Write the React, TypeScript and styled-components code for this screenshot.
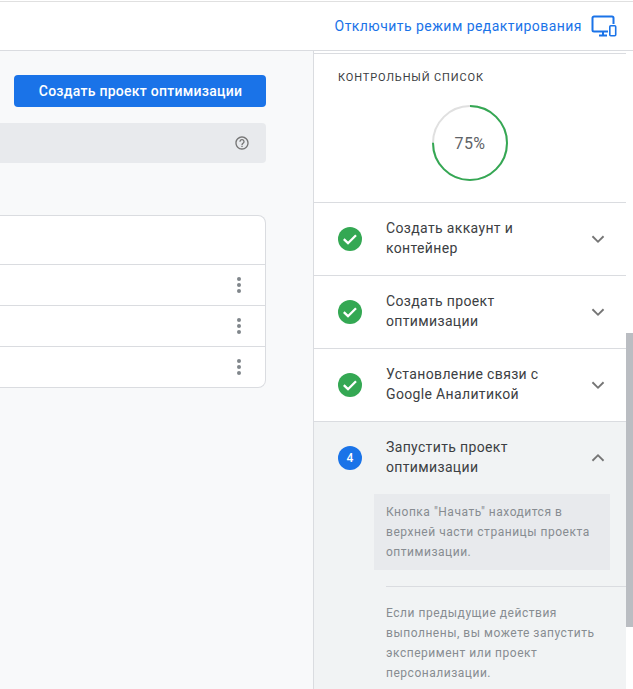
import React from 'react';
import styled, { createGlobalStyle } from 'styled-components';

const GlobalStyle = createGlobalStyle`
	html, body {
		margin: 0;
		padding: 0;
		background: #fff;
		height: 100%;
		overflow: hidden;
		font-family: Roboto, "Noto Sans", sans-serif;
	}
`;

const Page = styled.div`
	width: 633px;
	height: 689px;
	overflow: hidden;
	display: flex;
	flex-direction: column;
`;

const Header = styled.header`
	margin-top: 1px;
	height: 48px;
	flex: none;
	border-top: 1px solid #e0e0e0;
	border-bottom: 1px solid #dadce0;
	display: flex;
	align-items: center;
	justify-content: flex-end;
	padding-right: 16px;
	gap: 9px;
`;

const EditLink = styled.a`
	color: #1a73e8;
	font-size: 14px;
	letter-spacing: 0.45px;
`;

const Body = styled.div`
	flex: 1;
	display: flex;
	min-height: 0;
`;

const Main = styled.main`
	width: 313px;
	flex: none;
	box-sizing: border-box;
	background: #f8f9fa;
	padding: 24px 47px 0 0;
	display: flex;
	flex-direction: column;
	align-items: flex-end;
`;

const PrimaryButton = styled.button`
	width: 252px;
	height: 32px;
	border: none;
	border-radius: 4px;
	background: #1a73e8;
	color: #fff;
	font-family: inherit;
	font-size: 14px;
	font-weight: 500;
	letter-spacing: 0.27px;
	padding: 0 0 0 1px;
`;

const InfoBar = styled.div`
	margin-top: 16px;
	width: 100%;
	height: 40px;
	background: #e8eaed;
	border-radius: 0 4px 4px 0;
	display: flex;
	align-items: center;
	justify-content: flex-end;
	padding-right: 16px;
	box-sizing: border-box;
	color: #757575;
`;

const Table = styled.div`
	margin-top: 52px;
	width: 100%;
	box-sizing: border-box;
	background: #fff;
	border: 1px solid #dadce0;
	border-left: none;
	border-radius: 0 8px 8px 0;
`;

const TableRow = styled.div<{ $head?: boolean }>`
	height: ${p => (p.$head ? 48 : 40)}px;
	border-bottom: 1px solid #dadce0;
	display: flex;
	align-items: center;
	justify-content: flex-end;
	padding-right: 19px;
	&:last-child {
		border-bottom: none;
	}
`;

const Side = styled.aside`
	flex: 1;
	display: flex;
	min-width: 0;
`;

const Panel = styled.div`
	width: 313px;
	flex: none;
	box-sizing: border-box;
	border-left: 1px solid #dadce0;
	padding-top: 2px;
`;

const Summary = styled.div`
	height: 148px;
	border-top: 1px solid #dadce0;
	border-bottom: 1px solid #dadce0;
	box-sizing: content-box;
	padding-left: 24px;
`;

const ChecklistTitle = styled.div`
	padding-top: 17px;
	font-size: 11px;
	line-height: 14px;
	letter-spacing: 0.86px;
	color: #3c4043;
	text-transform: uppercase;
`;

const Donut = styled.div`
	position: relative;
	width: 78px;
	height: 78px;
	margin: 19px 0 0 93px;
`;

const DonutLabel = styled.div`
	position: absolute;
	inset: 1px 0 0;
	display: flex;
	align-items: center;
	justify-content: center;
	font-size: 16px;
	letter-spacing: 0.4px;
	color: #5f6368;
`;

const StepHead = styled.div<{ $open?: boolean }>`
	height: 72px;
	display: flex;
	align-items: center;
	padding: 0 16px 0 24px;
	background: ${p => (p.$open ? '#f1f3f4' : '#fff')};
	border-bottom: ${p => (p.$open ? 'none' : '1px solid #dadce0')};
`;

const NumberBadge = styled.div`
	width: 24px;
	height: 24px;
	flex: none;
	border-radius: 50%;
	background: #1a73e8;
	color: #fff;
	font-size: 12px;
	font-weight: 500;
	display: flex;
	align-items: center;
	justify-content: center;
`;

const StepTitle = styled.div`
	flex: 1;
	margin: -3px 0 0 24px;
	font-size: 14px;
	line-height: 20px;
	letter-spacing: 0.35px;
	color: #3c4043;
`;

const OpenBody = styled.div`
	background: #f1f3f4;
	height: 267px;
	padding-top: 0;
`;

const Hint = styled.div`
	margin-left: 60px;
	width: 236px;
	height: 76px;
	box-sizing: border-box;
	background: #e8eaed;
	padding: 8px 12px;
	font-size: 12px;
	line-height: 20px;
	letter-spacing: 0.52px;
	color: #878c91;
`;

const Divider = styled.div`
	margin: 16px 0 16px 72px;
	height: 1px;
	background: #dadce0;
`;

const StepText = styled.div`
	margin-left: 72px;
	width: 224px;
	font-size: 12px;
	line-height: 20px;
	letter-spacing: 0.52px;
	color: #878c91;
`;

const ScrollTrack = styled.div`
	flex: 1;
	padding-top: 282px;
`;

const ScrollThumb = styled.div`
	height: 294px;
	background: #babdc2;
`;

const DevicesIcon = () => (
	<svg width="26" height="22" viewBox="0 0 26 22" fill="none" stroke="#1a73e8">
		<path d="M17 16.5H3A1.5 1.5 0 0 1 1.5 15V3A1.5 1.5 0 0 1 3 1.5h18A1.5 1.5 0 0 1 22.5 3v6" strokeWidth="2" />
		<path d="M12 17v3M8 20.5h8" strokeWidth="2" />
		<rect x="18.8" y="10.8" width="5.9" height="9.9" rx="1" strokeWidth="1.6" />
	</svg>
);

const HelpIcon = () => (
	<svg width="16" height="16" viewBox="0 0 24 24" fill="currentColor">
		<path d="M11 18h2v-2h-2v2zm1-16C6.48 2 2 6.48 2 12s4.48 10 10 10 10-4.48 10-10S17.52 2 12 2zm0 18c-4.41 0-8-3.59-8-8s3.59-8 8-8 8 3.59 8 8-3.59 8-8 8zm0-14c-2.21 0-4 1.79-4 4h2c0-1.1.9-2 2-2s2 .9 2 2c0 2-3 1.75-3 5h2c0-2.25 3-2.5 3-5 0-2.21-1.79-4-4-4z" />
	</svg>
);

const MoreIcon = () => (
	<svg width="14" height="20" viewBox="0 0 14 20" fill="#80868b">
		<circle cx="7" cy="4" r="2" />
		<circle cx="7" cy="10" r="2" />
		<circle cx="7" cy="16" r="2" />
	</svg>
);

const DoneIcon = () => (
	<svg width="24" height="24" viewBox="0 0 24 24" style={{ flex: 'none' }}>
		<circle cx="12" cy="12" r="12" fill="#34a853" />
		<path d="M5.8 12.2l4.2 4 8-8" fill="none" stroke="#fff" strokeWidth="2.3" />
	</svg>
);

const Chevron = ({ up }: { up?: boolean }) => (
	<svg width="24" height="24" viewBox="0 0 24 24" fill="#757575" style={{ flex: 'none', transform: up ? 'rotate(180deg)' : undefined }}>
		<path d="M16.9 8.6L12 13.5 7.1 8.6 5.8 9.9l6.2 6.2 6.2-6.2z" />
	</svg>
);

const ProgressRing = ({ percent }: { percent: number }) => {
	const r = 37;
	const len = 2 * Math.PI * r;
	return (
		<svg width="78" height="78" viewBox="0 0 78 78" fill="none" strokeWidth="2">
			<circle cx="39" cy="39" r={r} stroke="#e0e0e0" />
			<circle
				cx="39"
				cy="39"
				r={r}
				stroke="#34a853"
				strokeDasharray={`${(len * percent) / 100} ${len}`}
				transform="rotate(-90 39 39)"
			/>
		</svg>
	);
};

const doneSteps = [
	['Создать аккаунт и', 'контейнер'],
	['Создать проект', 'оптимизации'],
	['Установление связи с', 'Google Аналитикой'],
];

export default function App() {
	return (
		<Page>
			<GlobalStyle />
			<Header>
				<EditLink>Отключить режим редактирования</EditLink>
				<DevicesIcon />
			</Header>
			<Body>
				<Main>
					<PrimaryButton>Создать проект оптимизации</PrimaryButton>
					<InfoBar><HelpIcon /></InfoBar>
					<Table>
						<TableRow $head />
						<TableRow><MoreIcon /></TableRow>
						<TableRow><MoreIcon /></TableRow>
						<TableRow><MoreIcon /></TableRow>
					</Table>
				</Main>
				<Side>
					<Panel>
						<Summary>
							<ChecklistTitle>Контрольный список</ChecklistTitle>
							<Donut>
								<ProgressRing percent={75} />
								<DonutLabel>75%</DonutLabel>
							</Donut>
						</Summary>
						{doneSteps.map(lines => (
							<StepHead key={lines[0]}>
								<DoneIcon />
								<StepTitle>{lines[0]}<br />{lines[1]}</StepTitle>
								<Chevron />
							</StepHead>
						))}
						<StepHead $open>
							<NumberBadge>4</NumberBadge>
							<StepTitle>Запустить проект<br />оптимизации</StepTitle>
							<Chevron up />
						</StepHead>
						<OpenBody>
							<Hint>
								Кнопка "Начать" находится в<br />
								верхней части страницы проекта<br />
								оптимизации.
							</Hint>
							<Divider />
							<StepText>
								Если предыдущие действия<br />
								выполнены, вы можете запустить<br />
								эксперимент или проект<br />
								персонализации.
							</StepText>
						</OpenBody>
					</Panel>
					<ScrollTrack><ScrollThumb /></ScrollTrack>
				</Side>
			</Body>
		</Page>
	);
}
